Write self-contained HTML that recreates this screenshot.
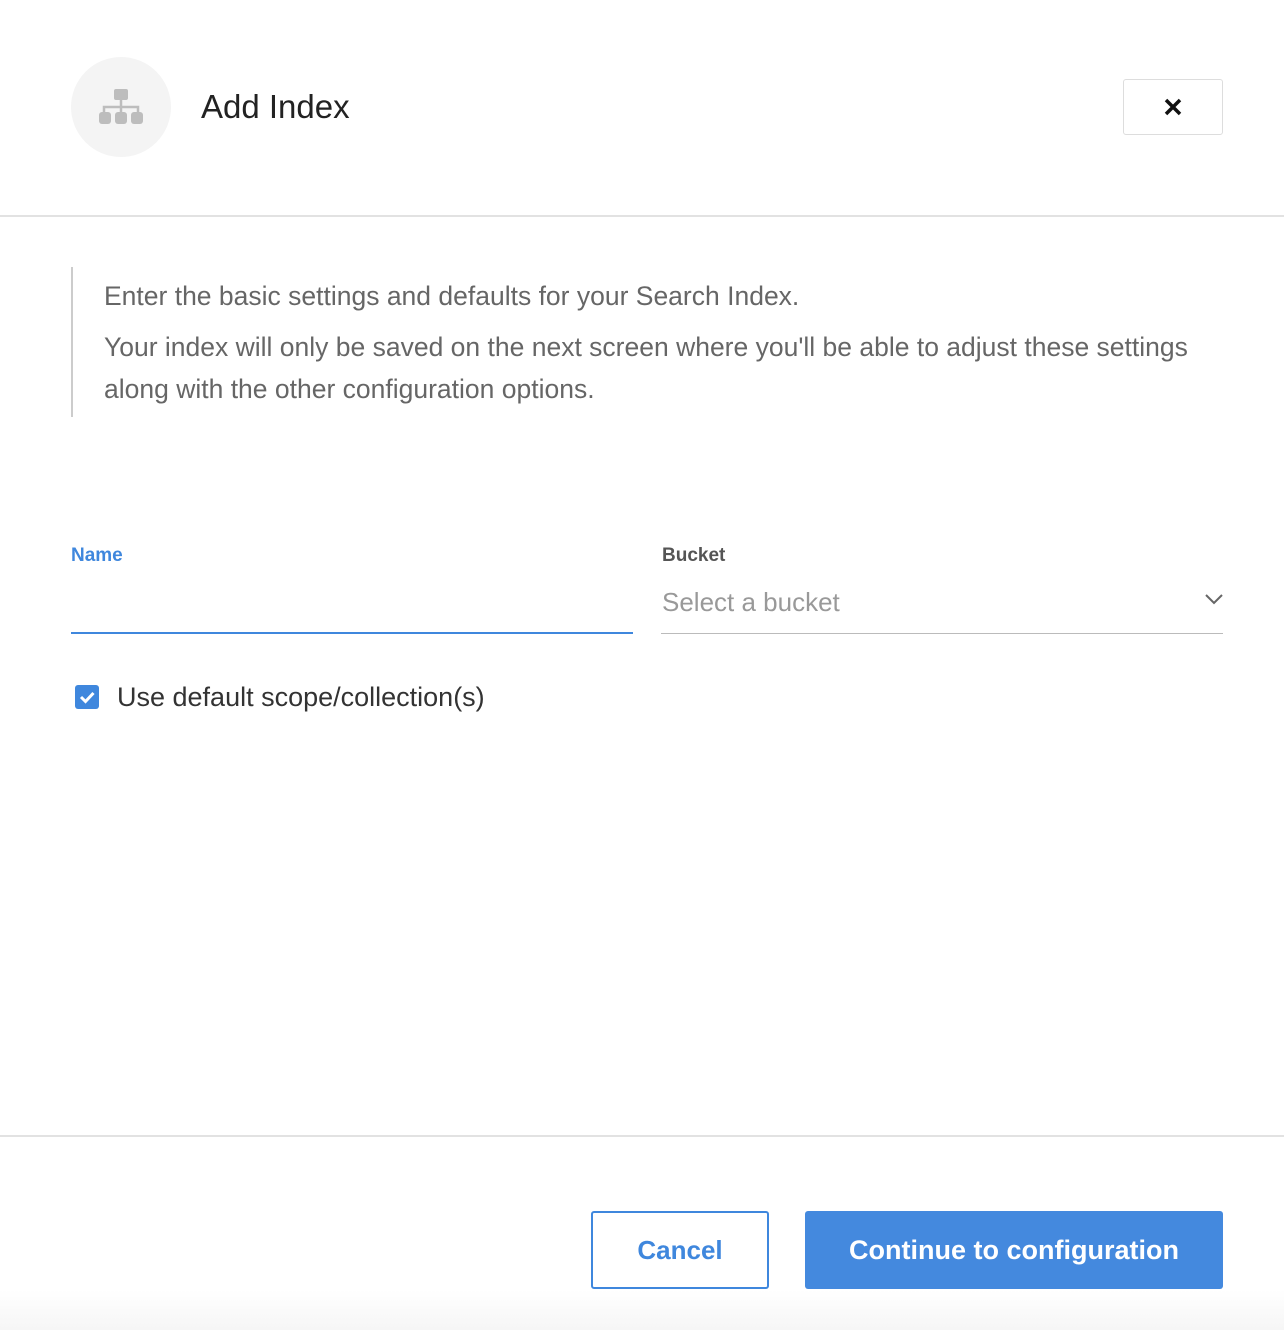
<!DOCTYPE html>
<html><head><style>
body{margin:0;width:1284px;height:1330px;background:#fff;font-family:"Liberation Sans",sans-serif;position:relative;overflow:hidden}
.a{position:absolute;white-space:nowrap}
</style></head><body>
<div class="a" style="left:71px;top:57px;width:100px;height:100px;border-radius:50%;background:#f4f4f4"></div>
<svg class="a" style="left:98px;top:88px" width="46" height="38" viewBox="0 0 46 38">
<rect x="16" y="1" width="14" height="11" rx="2" fill="#bdbdbd"/>
<path d="M23 11v8M6 26v-7h34v7M23 19v7" stroke="#bdbdbd" stroke-width="2.5" fill="none"/>
<rect x="1" y="24" width="12" height="12" rx="3" fill="#bdbdbd"/>
<rect x="17" y="24" width="12" height="12" rx="3" fill="#bdbdbd"/>
<rect x="33" y="24" width="12" height="12" rx="3" fill="#bdbdbd"/>
</svg>
<div class="a" style="left:201px;top:88px;font-size:33px;color:#222">Add Index</div>
<div class="a" style="left:1123px;top:79px;width:98px;height:54px;border:1px solid #ddd;border-radius:3px"></div>
<svg class="a" style="left:1163px;top:97px" width="20" height="20"><path d="M3 3L17 17M17 3L3 17" stroke="#111" stroke-width="3.5"/></svg>
<div class="a" style="left:0;top:215px;width:1284px;height:2px;background:#e2e2e2"></div>
<div class="a" style="left:71px;top:267px;width:2px;height:150px;background:#ccc"></div>
<div class="a" style="left:104px;top:275px;font-size:26.5px;color:#666;line-height:42px">Enter the basic settings and defaults for your Search Index.</div>
<div class="a" style="left:104px;top:326px;font-size:26.5px;color:#666;line-height:42px">Your index will only be saved on the next screen where you'll be able to adjust these settings<br>along with the other configuration options.</div>
<div class="a" style="left:71px;top:545px;font-size:19px;font-weight:bold;color:#3f87dd">Name</div>
<div class="a" style="left:71px;top:632px;width:562px;height:2px;background:#3f87dd"></div>
<div class="a" style="left:662px;top:545px;font-size:19px;font-weight:bold;color:#555">Bucket</div>
<div class="a" style="left:662px;top:587px;font-size:26px;color:#999">Select a bucket</div>
<svg class="a" style="left:1204px;top:592px" width="20" height="14"><path d="M2 3l8 8 8-8" stroke="#666" stroke-width="2" fill="none"/></svg>
<div class="a" style="left:661px;top:633px;width:562px;height:1px;background:#bbb"></div>
<div class="a" style="left:75px;top:685px;width:24px;height:24px;border-radius:3px;background:#3f87dd"></div>
<svg class="a" style="left:75px;top:685px" width="24" height="24"><path d="M6 12l4.5 4.5L18.5 8" stroke="#fff" stroke-width="3" fill="none"/></svg>
<div class="a" style="left:117px;top:682px;font-size:27px;color:#333">Use default scope/collection(s)</div>
<div class="a" style="left:0;top:1135px;width:1284px;height:2px;background:#e2e2e2"></div>
<div class="a" style="left:0;top:1290px;width:1284px;height:40px;background:linear-gradient(#fff,#f6f6f6)"></div>
<div class="a" style="left:591px;top:1211px;width:174px;height:74px;border:2px solid #3f87dd;border-radius:3px;background:#fff;color:#3f87dd;font-size:26px;font-weight:bold;text-align:center;line-height:74px">Cancel</div>
<div class="a" style="left:805px;top:1211px;width:418px;height:78px;border-radius:3px;background:#4489de;color:#fff;font-size:27px;font-weight:bold;text-align:center;line-height:78px">Continue to configuration</div>
</body></html>
